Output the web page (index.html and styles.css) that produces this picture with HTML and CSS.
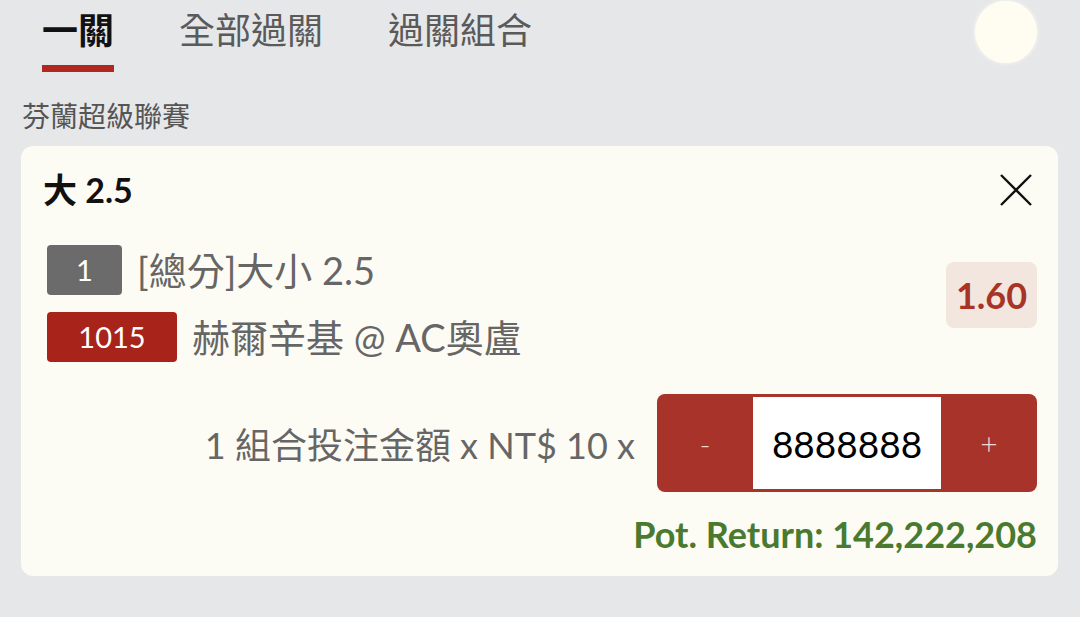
FILE: index.html
```html
<!DOCTYPE html>
<html lang="zh-Hant">
<head>
    <meta charset="UTF-8">
    <meta name="viewport" content="width=device-width, initial-scale=1.0">
    <title>投注單</title>
    <link rel="stylesheet" href="styles.css">
</head>
<body>
    <div class="topbar">
        <div class="tabs">
            <div class="tab active">一關</div>
            <div class="tab">全部過關</div>
            <div class="tab">過關組合</div>
        </div>
        <div class="avatar"></div>
    </div>

    <div class="league">芬蘭超級聯賽</div>

    <div class="card">
        <div class="card-head">
            <div class="selection">大 2.5</div>
            <svg class="close" width="34" height="34" viewBox="0 0 34 34">
                <path d="M2 2 L32 32 M32 2 L2 32" stroke="#111" stroke-width="2.4" fill="none"/>
            </svg>
        </div>

        <div class="bet-row">
            <div class="bet-info">
                <div class="line">
                    <span class="badge grey">1</span>
                    <span class="text">[總分]大小 2.5</span>
                </div>
                <div class="line">
                    <span class="badge red">1015</span>
                    <span class="text">赫爾辛基 @ AC奧盧</span>
                </div>
            </div>
            <div class="odds">1.60</div>
        </div>

        <div class="stake-row">
            <span class="stake-label">1 組合投注金額 x NT$ 10 x</span>
            <div class="stepper">
                <button type="button" class="step">-</button>
                <input type="text" class="amount" value="8888888">
                <button type="button" class="step">+</button>
            </div>
        </div>

        <div class="pot-return">Pot. Return: 142,222,208</div>
    </div>
</body>
</html>
```

FILE: styles.css
```css
body {
    font-family: Lato, "Noto Sans CJK TC", sans-serif;
    background-color: #e6e7e9;
    color: #333;
    margin: 0;
    padding: 0 21px;
    height: 617px;
    overflow: hidden;
}
.topbar {
    display: flex;
    justify-content: space-between;
    align-items: flex-start;
}
.tabs {
    display: flex;
    gap: 65px;
    padding-left: 21px;
}
.tab {
    font-family: "Noto Sans CJK TC", sans-serif;
    font-size: 36px;
    line-height: 40px;
    color: #5a5a5a;
    padding-top: 8px;
    height: 55px;
    box-sizing: border-box;
}
.tab.active {
    color: #111;
    font-weight: bold;
    border-bottom: 7px solid #b0281f;
    height: 72px;
}
.avatar {
    width: 62px;
    height: 62px;
    border-radius: 50%;
    background-color: #fffdf2;
    box-shadow: 0 0 4px #fffdf2;
    margin-top: 1px;
    margin-right: 22px;
}
.league {
    font-family: "Noto Sans CJK TC", sans-serif;
    font-size: 28px;
    color: #555;
    margin-top: 26px;
    line-height: 34px;
    padding-left: 1px;
}
.card {
    background-color: #fdfcf4;
    border-radius: 12px;
    margin-top: 14px;
    padding: 24px 21px 20px 26px;
    height: 430px;
    box-sizing: border-box;
    width: 1037px;
}
.card-head {
    display: flex;
    justify-content: space-between;
    align-items: center;
}
.selection {
    font-size: 34px;
    font-weight: bold;
    color: #111;
    line-height: 40px;
    margin-left: -4px;
}
.close {
    margin-right: 4px;
}
.bet-row {
    display: flex;
    justify-content: space-between;
    align-items: flex-start;
    margin-top: 35px;
}
.bet-info {
    display: flex;
    flex-direction: column;
    gap: 17px;
}
.line {
    display: flex;
    align-items: center;
    gap: 15px;
    height: 50px;
}
.badge {
    display: inline-block;
    height: 50px;
    line-height: 50px;
    text-align: center;
    color: white;
    font-size: 29px;
    border-radius: 4px;
}
.badge.grey {
    background-color: #6b6b6b;
    width: 75px;
}
.badge.red {
    background-color: #a8231a;
    width: 130px;
}
.line .text {
    font-size: 38px;
    color: #666;
    line-height: 46px;
}
.odds {
    background-color: #f2e6df;
    color: #a83426;
    font-size: 36px;
    font-weight: bold;
    border-radius: 8px;
    width: 91px;
    height: 66px;
    line-height: 66px;
    text-align: center;
    margin-top: 17px;
}
.stake-row {
    display: flex;
    justify-content: flex-end;
    align-items: center;
    gap: 22px;
    margin-top: 32px;
}
.stake-label {
    font-size: 36px;
    color: #666;
}
.stepper {
    display: flex;
    background-color: #a8332a;
    border-radius: 8px;
    height: 98px;
    width: 380px;
    overflow: hidden;
}
.step {
    width: 96px;
    border: none;
    background: none;
    color: #f3d9d4;
    font-size: 30px;
    font-family: Lato, sans-serif;
    font-weight: 300;
    padding: 0;
}
.amount {
    width: 188px;
    border: none;
    margin: 3px 0;
    background-color: white;
    text-align: center;
    font-size: 37px;
    font-family: Lato, sans-serif;
    color: #000;
    padding: 0;
    outline: none;
}
.pot-return {
    text-align: right;
    color: #4a7a2f;
    font-size: 36px;
    font-weight: bold;
    margin-top: 20px;
    line-height: 44px;
}
```
